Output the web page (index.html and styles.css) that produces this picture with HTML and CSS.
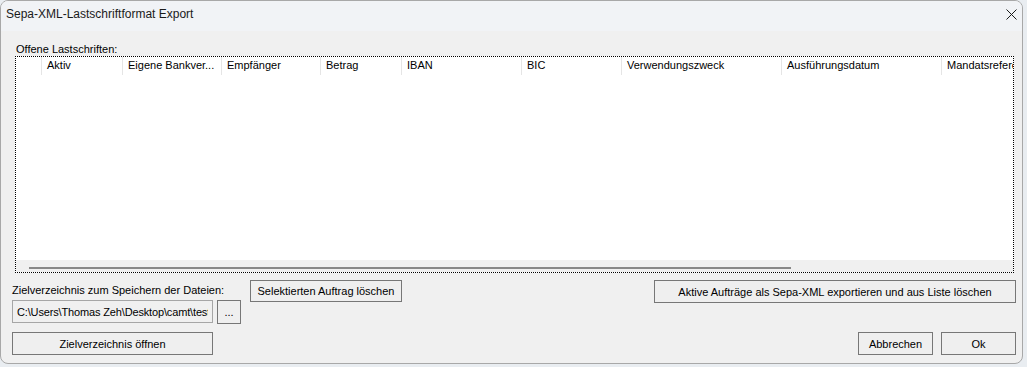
FILE: index.html
```html
<!DOCTYPE html>
<html lang="de">

<head>
    <meta charset="UTF-8">
    <meta name="viewport" content="width=device-width, initial-scale=1.0">
    <title>Sepa-XML-Lastschriftformat Export</title>
    <link rel="stylesheet" href="styles.css">
</head>

<body>
    <div class="window">
        <div class="titlebar">
            <span class="title">Sepa-XML-Lastschriftformat Export</span>
            <svg class="close" width="11" height="11" viewBox="0 0 11 11">
                <path d="M0.5 0.5 L10.5 10.5 M10.5 0.5 L0.5 10.5" stroke="#1a1a1a" stroke-width="1" fill="none"/>
            </svg>
        </div>

        <div class="client">
            <div class="group-label">Offene Lastschriften:</div>

            <div class="list">
                <div class="list-header">
                    <div class="col c0"></div>
                    <div class="col c1">Aktiv</div>
                    <div class="col c2">Eigene Bankver...</div>
                    <div class="col c3">Empfänger</div>
                    <div class="col c4">Betrag</div>
                    <div class="col c5">IBAN</div>
                    <div class="col c6">BIC</div>
                    <div class="col c7">Verwendungszweck</div>
                    <div class="col c8">Ausführungsdatum</div>
                    <div class="col c9">Mandatsreferenz</div>
                </div>
                <div class="list-body"></div>
                <div class="hscroll">
                    <div class="thumb"></div>
                </div>
            </div>

            <div class="actions">
                <div class="target">
                    <label for="zielPfad">Zielverzeichnis zum Speichern der Dateien:</label>
                    <div class="path-row">
                        <input type="text" id="zielPfad" class="path" value="C:\Users\Thomas Zeh\Desktop\camt\test" readonly>
                        <button class="btn btn-browse">...</button>
                    </div>
                </div>
                <button class="btn btn-delete">Selektierten Auftrag löschen</button>
                <button class="btn btn-export">Aktive Aufträge als Sepa-XML exportieren und aus Liste löschen</button>
            </div>

            <div class="footer">
                <button class="btn btn-open">Zielverzeichnis öffnen</button>
                <div class="dialog-buttons">
                    <button class="btn btn-dialog">Abbrechen</button>
                    <button class="btn btn-dialog">Ok</button>
                </div>
            </div>
        </div>
    </div>
</body>

</html>
```

FILE: styles.css
```css
body {
    margin: 0;
    background-color: #e9edf1;
    font-family: "Liberation Sans", Arial, sans-serif;
    font-size: 11px;
    color: #000;
}

.window {
    box-sizing: border-box;
    width: 1023px;
    height: 364px;
    background-color: #f0f0f0;
    border: 1px solid #a8a8a8;
    border-radius: 8px;
    overflow: hidden;
    display: flex;
    flex-direction: column;
}

/* Titelleiste */
.titlebar {
    height: 30px;
    flex-shrink: 0;
    display: flex;
    justify-content: space-between;
    align-items: flex-start;
    background-color: #f1f3f6;
}

.title {
    font-size: 12px;
    line-height: 16px;
    padding-top: 5px;
    padding-left: 5px;
    color: #1a1a1a;
}

.close {
    margin-top: 8px;
    margin-right: 5px;
}

.client {
    flex: 1;
    padding-top: 12px;
    display: flex;
    flex-direction: column;
}

.group-label {
    line-height: 13px;
    margin-left: 15px;
}

/* Liste */
.list {
    box-sizing: border-box;
    width: 999px;
    height: 217px;
    margin-left: 14px;
    border: 1px dotted #000;
    background-color: #fff;
    display: flex;
    flex-direction: column;
    overflow: hidden;
}

.list-header {
    display: flex;
    height: 18px;
    flex-shrink: 0;
}

.col {
    box-sizing: border-box;
    flex-shrink: 0;
    line-height: 13px;
    padding-top: 2px;
    padding-left: 5px;
    border-right: 1px solid #e5e5e5;
    white-space: nowrap;
    overflow: hidden;
}

.c0 { width: 26px; }
.c1 { width: 81px; }
.c2 { width: 99px; }
.c3 { width: 99px; }
.c4 { width: 81px; }
.c5 { width: 120px; }
.c6 { width: 100px; }
.c7 { width: 160px; }
.c8 { width: 160px; }
.c9 { width: 120px; border-right: none; }

.list-body {
    flex: 1;
}

.hscroll {
    height: 12px;
    flex-shrink: 0;
    background-color: #f0f0f0;
    padding-left: 13px;
    box-sizing: border-box;
    padding-top: 7px;
}

.thumb {
    width: 762px;
    height: 2px;
    background-color: #888;
}

/* Untere Bedienelemente */
.actions {
    display: flex;
    align-items: flex-start;
    padding-left: 11px;
    padding-top: 11px;
}

.target {
    display: flex;
    flex-direction: column;
}

.target label {
    line-height: 13px;
}

.path-row {
    display: flex;
    align-items: flex-start;
    margin-top: 3px;
    gap: 4px;
}

.path {
    box-sizing: border-box;
    width: 201px;
    height: 23px;
    padding: 0 4px;
    border: 1px solid #a6a6a6;
    background-color: #f0f0f0;
    font: inherit;
    letter-spacing: -0.15px;
    color: #000;
    outline: none;
}

.btn {
    box-sizing: border-box;
    height: 23px;
    padding: 0;
    border: 1px solid #777;
    border-radius: 0;
    background-color: #efefef;
    font: inherit;
    color: #000;
    text-align: center;
}

.btn-browse {
    width: 24px;
    height: 24px;
}

.btn-delete {
    width: 152px;
    height: 22px;
    margin-left: 9px;
    margin-top: -4px;
}

.btn-export {
    width: 362px;
    margin-left: auto;
    margin-right: 6px;
    margin-top: -4px;
}

.footer {
    display: flex;
    justify-content: space-between;
    padding-left: 11px;
    padding-right: 6px;
    margin-top: 8px;
}

.btn-open {
    width: 201px;
}

.dialog-buttons {
    display: flex;
    gap: 8px;
}

.btn-dialog {
    width: 75px;
}
```
